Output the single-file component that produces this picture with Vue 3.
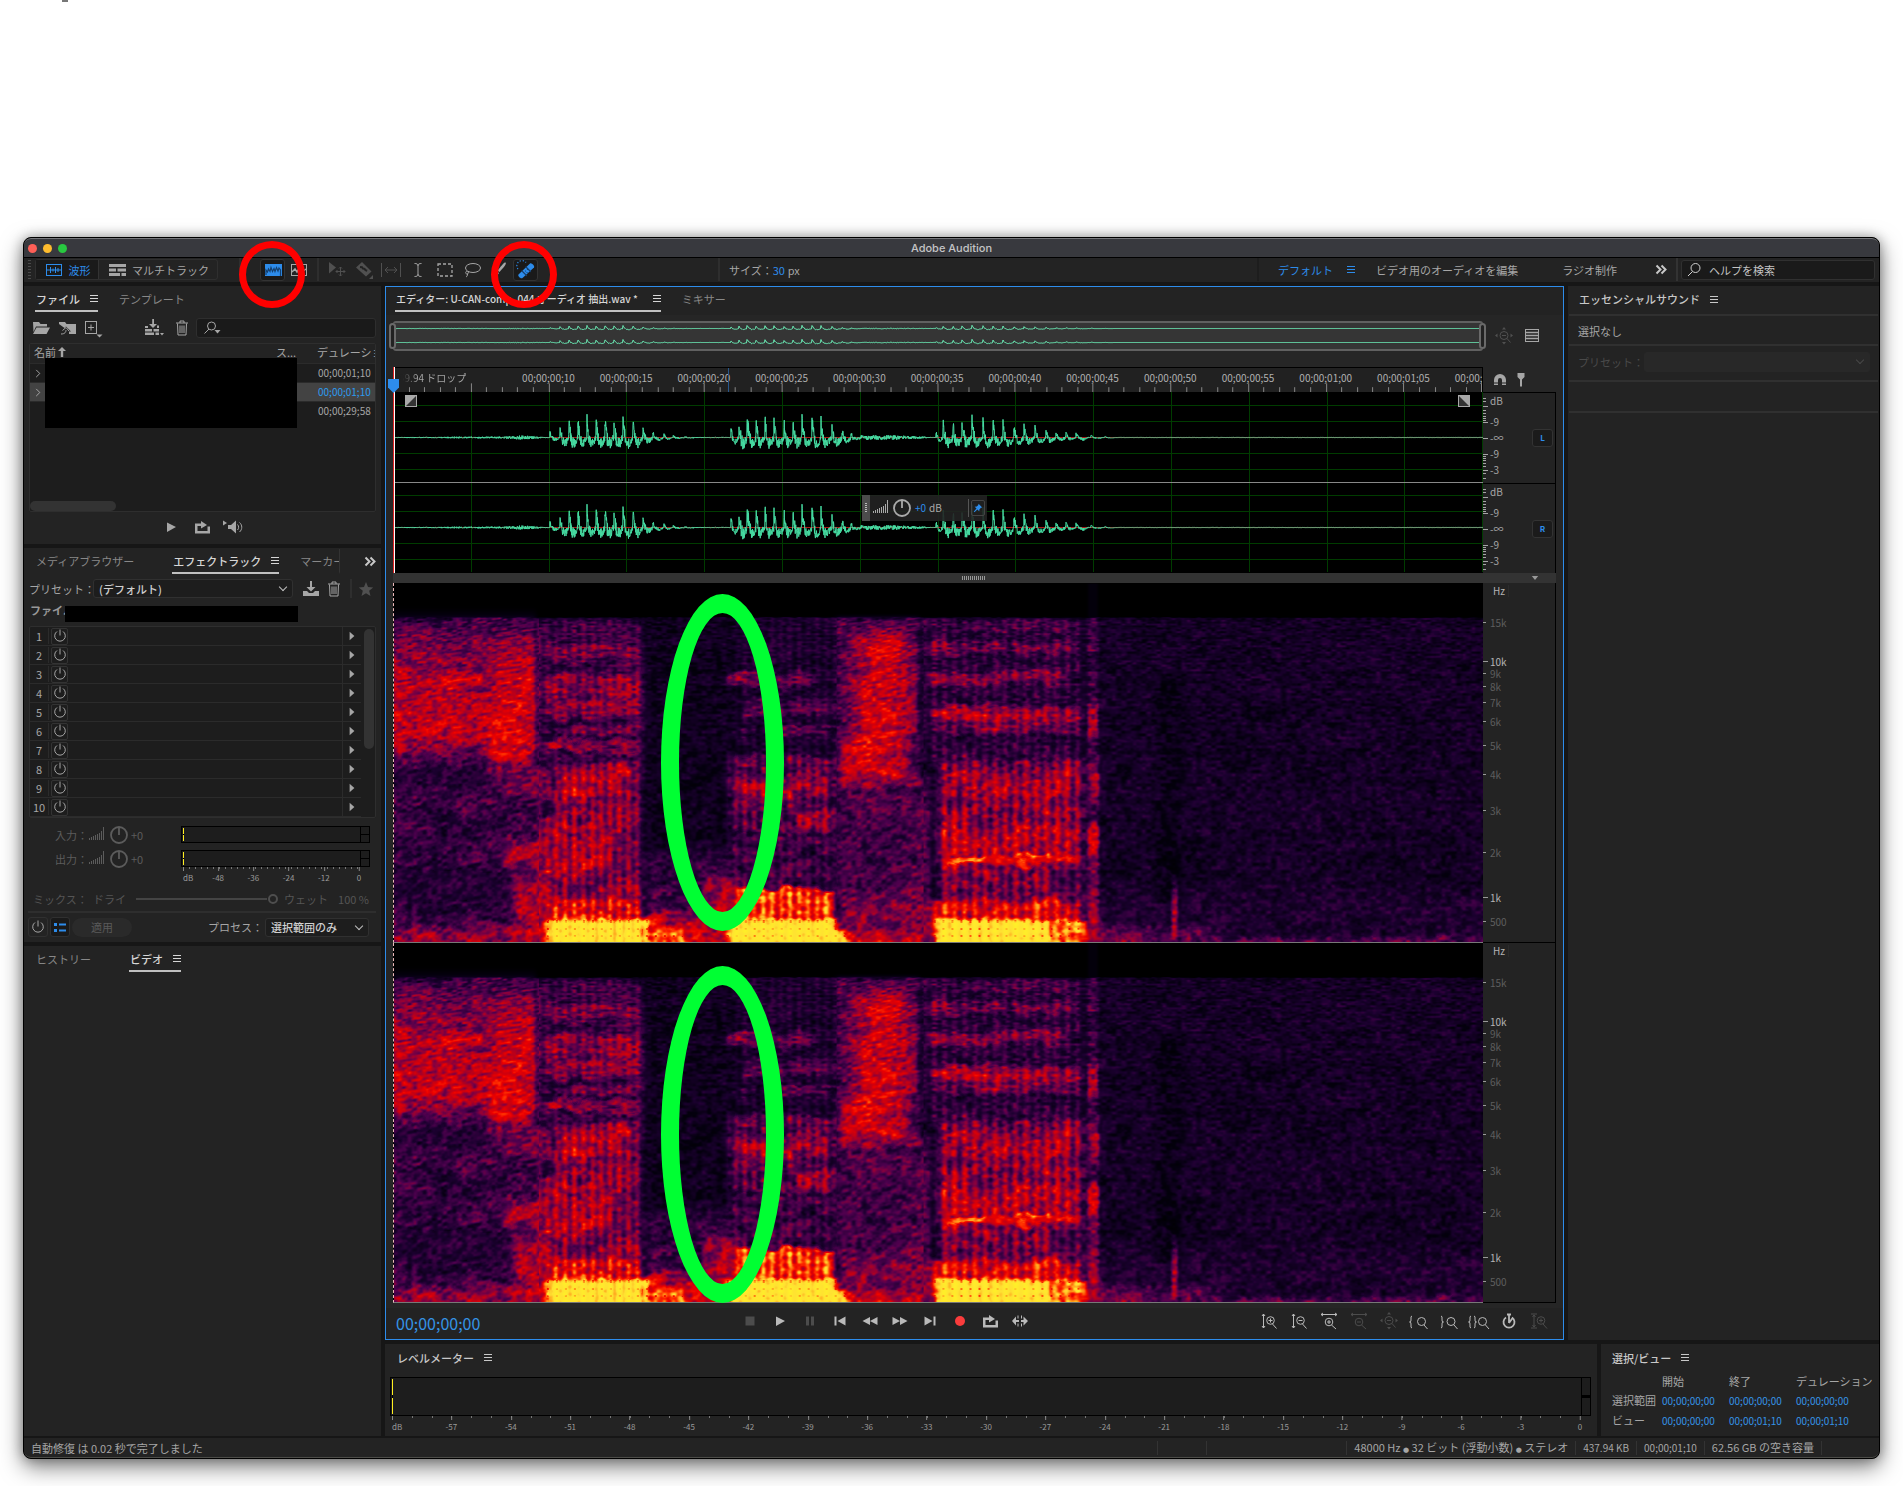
<script setup>
import { ref, computed, onMounted } from 'vue'

const icons = {
  menu: '<path d="M6 6.500h8M6 9.500h8M6 12.500h8" class="s"/>',
  chevrons: '<path d="M5.500 5.500l4 4-4 4M10.500 5.500l4 4-4 4" fill="none" stroke="currentColor" stroke-width="2"/>',
  search: '<circle cx="11.500" cy="8" r="4.500" class="s"/><path d="M8.500 11.500L4 16" class="s"/>',
  searchDrop: '<circle cx="9.500" cy="8" r="4" class="s"/><path d="M7 11L2.500 15.500" class="s"/><path d="M12.500 12h6l-3 3.500z"/>',
  wave: '<rect x="2.500" y="4.500" width="15" height="11" class="s"/><path d="M3 10h14M6.500 7v6M9 8.500v3M11.500 7v6M14 8v4" class="s"/>',
  multi: '<path d="M2 4h17v3H2zM2 8.500h7v3H2zM10.500 8.500H19v3h-8.500zM2 13h11v3H2zM14.500 13H19v3h-4.500z"/>',
  spectral: '<rect x="2" y="4" width="17" height="12"/><path d="M3 15v-5l1.500 2 1-3 1.500 2.500 1-4 1.500 4 1.500-3 1 3 1.500-4 1.500 3.500 1-3 1.500 2v6" fill="none" stroke="#14406f" stroke-width="1.200"/>',
  spectral2: '<rect x="2.500" y="4.500" width="15" height="11" class="s"/><path d="M3 12l3-3 2 3 3-5 2 5 4-3" fill="none" stroke="currentColor" stroke-width="1.500"/>',
  move: '<path d="M2 2v11.500l7-6z"/><path d="M13.500 7v9M9 11.500h9M12 8.500L13.500 7 15 8.500M12 14.500l1.500 1.500 1.500-1.500M10.500 10L9 11.500l1.500 1.500M16.500 10l1.500 1.500-1.500 1.500" class="s"/>',
  razor: '<path d="M2 7.500L8 2l9.500 9.500-5.500 5z"/><path d="M6 7l2 .2 1 1.300 1.500.3 1 1.400 1.700.5" fill="none" stroke="#232323" stroke-width="2"/><path d="M19 15v4h-4z"/>',
  slip: '<path d="M.5 3v14M19.500 3v14M4 10h12M7 7l-3 3 3 3M13 7l3 3-3 3" class="s"/>',
  ibeam: '<path d="M6.500 3.500c2 0 3.500.5 3.500 2 0-1.500 1.500-2 3.500-2M10 5v10M6.500 16.500c2 0 3.500-.5 3.500-2 0 1.500 1.500 2 3.500 2" class="s"/>',
  marquee: '<rect x="3" y="4" width="14" height="12" fill="none" stroke="currentColor" stroke-width="1.300" stroke-dasharray="3 2"/>',
  lasso: '<ellipse cx="11" cy="8" rx="7.500" ry="4.500" class="s"/><path d="M5 11c-2 1-1.500 3 0 3s2-2 .5-2.500M5.500 14c0 1.500-.5 2.500-1.500 3" class="s"/>',
  brush: '<path d="M16.500 2.500c1 .8.500 2.500-6 9.500l-2-1.500C14.500 3 15.800 2 16.500 2.500zM8 11.500l2 1.500c-1.500 3-4 4-6.500 4 1.700-1.500 2-4 4.500-5.500z"/>',
  heal: '<path d="M2 9a5 5 0 0 1 8-6.500" fill="none" stroke="currentColor" stroke-width="1.200" stroke-dasharray="1.200 1.800"/><path d="M2.500 14.500L14 3.500c1.500-1 5 2.500 4 4L6.500 18c-1.800 1.200-5.200-2-4-3.500z"/><path d="M6 11l4.500 4.500M10 7l4.500 4.500M9.500 11h.1M11 12.500h.1M11.500 9.500h.1" stroke="#14406f" stroke-width="1.200" fill="none" stroke-linecap="round"/>',
  folder: '<path d="M2 4h6l1.500 2H16v2.500H5L2.500 14zM5.500 9.500H19L15.500 16H2z"/>',
  importIc: '<path d="M2 4h6l1.500 2H19v10h-7v-2.500h2L9 8.500 7.500 10 2 6z"/><path d="M4 16c4 0 5-2 5-4M5.500 12.500L9 9.500l3 3.500" class="s"/>',
  add: '<rect x="2.500" y="3.500" width="11" height="12" class="s"/><path d="M8 6.500v6M5 9.500h6" class="s"/><path d="M13.500 16.500h6l-3 3z"/>',
  insert: '<path d="M9.200 1h1.800v5h3L10 10 6 6h3.200z"/><path d="M2 8h3v2H2zM2 11h7v2.500H2zM10.500 11H16v2.500h-5.500zM2 14.500h9V17H2zM12.500 14.500H16V17h-3.500zM14 7.500h2V10h-2zM17 15h4l-2 2.500z"/>',
  trash: '<path d="M4 5h12M8 5V3h4v2M5.500 5.500l.5 11.500h8l.5-11.500M8 7.500V15M10 7.500V15M12 7.500V15" class="s"/>',
  play: '<path d="M6 5.500l9 4.500-9 5z"/>',
  loop: '<path d="M3 6.500h6V4l6 4-6 3.500V9H5.500v5h10V9.500H18v7H3z"/>',
  speaker: '<path d="M0 3.500l4 2.500-4 2.500zM5 8h3l5-4.500v13L8 12H5z"/><path d="M14.500 7.500c1.500 1.500 1.500 4 0 5.500M16.500 5.500c3 2.500 3 7 0 9.500" class="s"/>',
  save: '<path d="M9 2h2v6h3.500L10 12.500 5.500 8H9zM2 12h4l2 2h4l2-2h4v5H2z"/>',
  star: '<path d="M10 3l2 5 5.200.4-4 3.400 1.300 5.200L10 14.200 5.500 17l1.300-5.200-4-3.400L8 8z"/>',
  power: '<path d="M7 5.500a5.300 5.300 0 1 0 6 0M10 3.500v6" class="s"/>',
  list: '<path d="M4 6h3v3H4zM4 12h3v3H4zM9 6.500h7v2H9zM9 12.500h7v2H9z"/>',
  arrow: '<path d="M6 3l8 7-8 7z"/>',
  bars: '<path d="M2.500 15v-2M4.500 15v-3M6.500 15v-4M8.500 15v-5M10.500 15V9M12.500 15V8M14.500 15V6M16.500 15V2" class="s"/>',
  knob: '<circle cx="10" cy="10" r="8" fill="none" stroke="currentColor" stroke-width="1.800"/><path d="M10 3v7" stroke="currentColor" stroke-width="1.800"/>',
  magnet: '<path d="M4 15v-5a6 6 0 0 1 12 0v5h-4v-5a2 2 0 0 0-4 0v5z"/><path d="M4 13h4M12 13h4" stroke="#232323"/>',
  marker: '<path d="M6.500 3h7v4l-2.500 2.500v7H9v-7L6.500 7z"/>',
  zoomAll: '<circle cx="10" cy="9.500" r="4" class="s"/><path d="M13 12.500l3.500 4M8 9.500h4" class="s"/><path d="M10 1l2 2.500H8zM10 18.500l2-2.500H8zM1 9.500L3.500 7.500v4zM19 9.500l-2.500-2v4z"/>',
  rows: '<rect x="3.500" y="3.500" width="13" height="12" class="s"/><path d="M4 6.500h12M4 9.500h12M4 12.500h12" fill="none" stroke="currentColor" stroke-width="1.500"/>',
  stop: '<path d="M5.500 5.500h9v9h-9z"/>',
  pause: '<path d="M6 5.500h3v9H6zM11 5.500h3v9h-3z"/>',
  prev: '<path d="M4.500 5.500h2v9h-2zM15.500 5.500v9L7.500 10z"/>',
  rew: '<path d="M10 6v8l-7.500-4zM17.500 6v8L10 10z"/>',
  ffw: '<path d="M2.500 6v8l7.500-4zM10 6v8l7.500-4z"/>',
  next: '<path d="M4.500 5.500v9l8-4.500zM13.500 5.500h2v9h-2z"/>',
  rec: '<circle cx="10" cy="10" r="5"/>',
  skip: '<path d="M6 5.500L2 10l4 4.500V11h3V9H6zM13.500 5.500l4.500 4.500-4.500 4.500V11H11V9h2.500zM7.500 4.500h1v3h-1zM7.500 12.500h1v3h-1zM11 4.500h1v3h-1zM11 12.500h1v3h-1z"/>',
  vIn: '<path d="M4.500 3v14M3 5l1.500-2L6 5M3 15l1.500 2L6 15M13.500 13l4 4.500M9.500 9.500h4M11.500 7.500v4" class="s"/><circle cx="11.500" cy="9.500" r="3.800" class="s"/>',
  vOut: '<path d="M4.500 3v14M3 5l1.500-2L6 5M3 15l1.500 2L6 15M13.500 13l4 4.500M9.500 9.500h4" class="s"/><circle cx="11.500" cy="9.500" r="3.800" class="s"/>',
  hIn: '<path d="M2 3.500h16M4 2L2 3.500 4 5M16 2l2 1.500L16 5M12.500 14l4.500 4M8 11h4M10 9v4" class="s"/><circle cx="10" cy="11" r="3.800" class="s"/>',
  hOut: '<path d="M2 3.500h16M4 2L2 3.500 4 5M16 2l2 1.500L16 5M12.500 14l4.500 4M8 11h4" class="s"/><circle cx="10" cy="11" r="3.800" class="s"/>',
  zL: '<path d="M3 5q-1.500 0-1 3t-1.500 3q2 0 1.500 3t1 3M15 14l3.500 4" class="s"/><circle cx="12.500" cy="10.500" r="4" class="s"/>',
  zR: '<path d="M2 5q1.500 0 1 3t1.500 3q-2 0-1.500 3t-1 3M15 14l3.500 4" class="s"/><circle cx="12" cy="10.500" r="4" class="s"/>',
  zLR: '<path d="M2 5q-1.500 0-1 3t-1.500 3q2 0 1.500 3t1 3M5 5q1.500 0 1 3t1.500 3q-2 0-1.500 3t-1 3M16.500 14l3.500 4" class="s"/><circle cx="13.500" cy="10.500" r="4" class="s"/>',
  timer: '<path d="M7 6.500a5.500 5.500 0 1 0 6 0M10 4v8M8 3.500h4M10 12l4-5.500" fill="none" stroke="currentColor" stroke-width="1.800"/>',
  vSel: '<path d="M2 3h6M2 17h6M5 4v12M3.500 6L5 4l1.500 2M3.500 14L5 16l1.500-2M14 13l4 4.500M10 9.500h4M12 7.500v4" class="s"/><circle cx="12" cy="9.500" r="3.800" class="s"/>',
  pin: '<path d="M11 3l6 6-2 .5-2.500 2.500-.5 3.500-3-3L4 17l-1-1 4.500-5-3-3 3.500-.5L10.500 5z"/>',
}

const tools = [
  { n: 'move', d: 1, l: '移動' }, { n: 'razor', d: 1, l: 'レーザー' }, { n: 'slip', d: 1, l: 'スリップ' },
  { n: 'ibeam', l: '時間選択' }, { n: 'marquee', l: '長方形選択' }, { n: 'lasso', l: 'なげなわ' },
  { n: 'brush', l: 'ブラシ' }, { n: 'heal', a: 1, l: 'スポット修復' },
]
const files = [
  { t: '00;00;01;10', c: 1 }, { t: '00;00;01;10', c: 1, sel: 1 }, { t: '00;00;29;58' },
]
const transport = [
  { n: 'stop', d: 1, l: '停止' }, { n: 'play', l: '再生' }, { n: 'pause', d: 1, l: '一時停止' }, { n: 'prev', l: '先頭' },
  { n: 'rew', l: '巻き戻し' }, { n: 'ffw', l: '早送り' }, { n: 'next', l: '末尾' }, { n: 'rec', r: 1, l: '録音' },
  { n: 'loop', l: 'ループ' }, { n: 'skip', l: 'スキップ' },
]
const zooms = [
  { n: 'vIn' }, { n: 'vOut' }, { n: 'hIn' }, { n: 'hOut', d: 1 }, { n: 'zoomAll', d: 1 },
  { n: 'zL' }, { n: 'zR' }, { n: 'zLR' }, { n: 'timer' }, { n: 'vSel', d: 1 },
]

const SPAN = 1090
const MAJOR = 77.8
const times = ['00;00;00;10', '00;00;00;15', '00;00;00;20', '00;00;00;25', '00;00;00;30', '00;00;00;35',
  '00;00;00;40', '00;00;00;45', '00;00;00;50', '00;00;00;55', '00;00;01;00', '00;00;01;05', '00;00;01;10']
  .map((t, i) => ({ t, x: ((i + 2) * MAJOR / SPAN) * 100 }))
const rulerTicks = computed(() => {
  let d = ''
  for (let i = 1; i <= 70; i++) {
    const x = Math.round(i * MAJOR / 5) + 0.5
    d += `M${x} 25v${i % 5 ? -5 : -9}`
  }
  return d
})
const vGrid = computed(() => {
  let d = ''
  for (let i = 1; i <= 14; i++) d += `M${Math.min(1089, Math.round(i * MAJOR)) + 0.5} 0V180`
  return d
})

const dbMarks = [{ t: 'dB', y: 8 }, { t: '-9', y: 29 }, { t: '-∞', y: 45 }, { t: '-9', y: 61 }, { t: '-3', y: 77 }]
const dbTicks = 'M0 5.500h3M0 8.500h3M0 13.500h5M0 17.500h3M0 20.500h3M0 23.500h3M0 25.500h3M0 27.500h3M0 29.500h5M0 45.500h5M0 61.500h5M0 63.500h3M0 65.500h3M0 67.500h3M0 70.500h3M0 73.500h3M0 77.500h5M0 80.500h3M0 85.500h3'
const hz = [
  { t: 'Hz', y: 8, k: 1, no: 1 }, { t: '15k', y: 40 }, { t: '10k', y: 79, k: 1 }, { t: '9k', y: 91 }, { t: '8k', y: 104 },
  { t: '7k', y: 120 }, { t: '6k', y: 139 }, { t: '5k', y: 163 }, { t: '4k', y: 192 }, { t: '3k', y: 228 },
  { t: '2k', y: 270 }, { t: '1k', y: 315, k: 1 }, { t: '500', y: 339 },
]
const rackScale = ['dB', '-48', '-36', '-24', '-12', '0'].map((t, i) => ({ t, x: i * 20 }))
const levelScale = Array.from({ length: 21 }, (_, i) => ({ t: i ? String(i * 3 - 60) : 'dB', x: i * 5 }))

/* deterministic noise shared by the waveform and the spectrogram */
function hash(x, y) {
  let n = (Math.imul(x, 374761393) + Math.imul(y, 668265263)) | 0
  n = Math.imul(n ^ (n >>> 13), 1274126177)
  n = Math.imul(n ^ (n >>> 15), 2246822519)
  return ((n ^ (n >>> 16)) >>> 0) / 4294967295
}
function noise(x, y) {
  const xi = Math.floor(x), yi = Math.floor(y)
  let fx = x - xi, fy = y - yi
  fx = fx * fx * (3 - 2 * fx)
  fy = fy * fy * (3 - 2 * fy)
  const a = hash(xi, yi), b = hash(xi + 1, yi), c = hash(xi, yi + 1), d = hash(xi + 1, yi + 1)
  return a + (b - a) * fx + (c - a) * fy + (a - b - c + d) * fx * fy
}

/* voiced pulses: [x, height] */
const pulses = [
  [157, 5], [167, 14], [176, 16], [185, 16], [194, 16], [203, 17], [212, 19], [221, 18], [230, 17], [240, 16], [250, 9], [260, 5], [271, 3], [280, 2], [292, 1],
  [338, 10], [346, 19], [354, 23], [363, 18], [372, 18], [381, 15], [391, 15], [400, 17], [409, 17], [419, 18], [428, 16], [439, 13], [449, 8], [458, 4], [468, 1],
  [543, 7], [550, 17], [560, 15], [569, 17], [579, 17], [590, 15], [600, 14], [610, 13], [621, 11], [631, 10], [642, 9], [653, 8], [663, 5], [673, 4], [683, 4], [698, 2], [712, 1],
]
function signal(x, rough) {
  let k = -1
  for (let i = 0; i < pulses.length; i++) if (pulses[i][0] <= x) k = i
  let v = 0
  if (k >= 0) {
    const [px, h] = pulses[k]
    const nx = pulses[k + 1] ? pulses[k + 1][0] : px + 12
    const p = (x - px) / Math.min(nx - px, 13)
    if (p < 1) {
      v = h * Math.exp(-p * 4.5) - Math.min(h, 15) * 0.5 * Math.sin(Math.PI * Math.pow(p, 0.8))
      v += (hash(Math.round(x * 4), 3) - 0.5) * h * 0.95 * (1 - p * 0.6) * rough
    }
  }
  let f = 0.4
  if (x < 150) f = x > 110 ? 2.2 - Math.abs(x - 128) / 14 : 0.4 + x / 160
  if (x > 455 && x < 535) f = 2.6 - Math.abs(x - 490) / 25
  if (x > 700) f = 0.15
  return v + (hash(Math.round(x * 4), 9) - 0.5) * 2 * f
}
function wavePath(mid, scale, step, rough) {
  let d = `M0 ${mid}`
  for (let x = 0; x <= SPAN; x += step) d += `L${x} ${(mid - signal(x, rough) * scale).toFixed(1)}`
  return d
}
const waves = [wavePath(45.5, 1, 0.25, 1), wavePath(135.5, 1, 0.25, 1)]
const overview = [wavePath(5.5, 0.16, 0.5, 0.5), wavePath(19.5, 0.16, 0.5, 0.5)]

/* painted regions: x0, x1, y0, y1, level, soft x, soft y, stripe period, stripe depth */
const regions = [
  [-20, 1110, 34, 380, 0.22, 1, 1, 0, 0],
  [-20, 142, 36, 110, 0.43, 8, 30, 0, 0], [-20, 142, 80, 176, 0.57, 8, 46, 0, 0], [95, 140, 66, 195, 0.62, 20, 40, 0, 0],
  [-20, 150, 192, 380, 0.33, 8, 34, 0, 0], [-20, 110, 285, 320, 0.29, 20, 10, 0, 0], [110, 160, 185, 210, 0.48, 18, 14, 0, 0],
  [110, 165, 258, 284, 0.56, 22, 14, 0, 0], [-20, 150, 344, 390, 0.52, 8, 18, 0, 0], [120, 160, 290, 390, 0.55, 16, 24, 0, 0],
  [142, 250, 36, 180, 0.34, 8, 5, 9, 0.03], [150, 248, 62, 76, 0.49, 16, 9, 9, 0.03], [150, 248, 90, 115, 0.53, 16, 12, 9, 0.05],
  [150, 248, 116, 134, 0.52, 16, 10, 9, 0.03], [165, 250, 142, 153, 0.45, 16, 7, 9, 0.03], [150, 248, 157, 167, 0.52, 16, 5, 0, 0],
  [158, 248, 178, 345, 0.49, 16, 14, 9, 0.06], [165, 235, 184, 214, 0.57, 16, 14, 9, 0.06], [145, 215, 238, 292, 0.58, 18, 18, 9, 0.06],
  [152, 252, 315, 345, 0.68, 16, 14, 9, 0.08], [250, 345, 34, 345, 0.19, 14, 2, 0, 0], [250, 345, 270, 380, 0.32, 16, 30, 0, 0],
  [255, 310, 328, 380, 0.58, 16, 14, 0, 0], [152, 258, 336, 390, 1, 14, 8, 9, 0.05], [250, 298, 344, 390, 0.84, 24, 12, 9, 0.06],
  [290, 330, 340, 390, 0.62, 14, 10, 0, 0],
  [343, 442, 34, 180, 0.26, 12, 3, 9, 0.03], [333, 420, 91, 102, 0.47, 12, 9, 9, 0.03], [350, 440, 116, 132, 0.39, 12, 9, 9, 0.03],
  [345, 440, 145, 153, 0.38, 12, 6, 0, 0], [335, 440, 174, 250, 0.42, 16, 6, 9, 0.06], [345, 435, 194, 214, 0.57, 16, 14, 9, 0.05],
  [405, 442, 226, 242, 0.52, 14, 10, 9, 0.05], [335, 442, 252, 305, 0.36, 14, 12, 9, 0.05], [310, 345, 295, 360, 0.54, 14, 16, 0, 0],
  [342, 440, 305, 345, 0.78, 8, 7, 9, 0.09], [333, 462, 336, 390, 1, 14, 7, 9, 0.04], [455, 530, 342, 390, 0.68, 18, 12, 0, 0],
  [442, 525, 34, 205, 0.4, 10, 10, 0, 0], [462, 514, 50, 200, 0.61, 34, 36, 0, 0], [448, 508, 155, 200, 0.62, 20, 20, 0, 0],
  [445, 532, 192, 204, 0.53, 14, 8, 0, 0], [442, 535, 206, 345, 0.38, 12, 10, 0, 0], [450, 540, 315, 350, 0.5, 20, 22, 0, 0],
  [530, 688, 36, 180, 0.3, 14, 3, 10.200, 0.04], [530, 680, 36, 48, 0.37, 14, 8, 10.200, 0.05], [534, 682, 58, 70, 0.47, 14, 9, 10.200, 0.05],
  [534, 670, 88, 101, 0.51, 14, 9, 10.200, 0.05], [540, 686, 122, 150, 0.47, 14, 9, 10.200, 0.06], [540, 686, 125, 135, 0.57, 14, 6, 10.200, 0.05],
  [545, 690, 176, 345, 0.49, 16, 14, 10.200, 0.08], [550, 672, 188, 212, 0.56, 14, 12, 10.200, 0.06], [545, 682, 242, 282, 0.59, 14, 14, 10.200, 0.07],
  [552, 592, 274, 281, 0.82, 6, 4, 0, 0], [620, 655, 272, 279, 0.82, 6, 4, 0, 0], [592, 682, 274, 282, 0.68, 6, 4, 0, 0], [655, 686, 285, 330, 0.4, 14, 14, 10.200, 0.05],
  [538, 686, 318, 345, 0.68, 14, 14, 10.200, 0.08],
  [540, 668, 336, 390, 1, 14, 7, 10.200, 0.05], [655, 694, 337, 390, 0.84, 14, 7, 10.200, 0.06],
  [694, 704, 0, 34, 0.09, 4, 2, 0, 0], [694, 704, 34, 345, 0.34, 6, 2, 0, 0], [694, 704, 58, 68, 0.45, 5, 14, 0, 0], [694, 704, 122, 150, 0.59, 5, 12, 0, 0],
  [694, 705, 175, 222, 0.5, 6, 18, 0, 0], [694, 705, 240, 280, 0.58, 5, 18, 0, 0], [694, 705, 280, 345, 0.48, 6, 14, 0, 0],
  [696, 755, 335, 390, 0.62, 16, 9, 0, 0], [745, 825, 338, 390, 0.51, 36, 14, 0, 0], [790, 1130, 352, 390, 0.41, 40, 10, 0, 0],
  [705, 1130, 305, 350, 0.26, 12, 30, 0, 0], [764, 790, 90, 320, 0.15, 22, 30, 0, 0], [778, 784, 308, 365, 0.55, 5, 26, 0, 0],
]
const stops = [[0, 0, 0, 0], [0.12, 4, 0, 14], [0.26, 28, 0, 48], [0.4, 78, 0, 78], [0.5, 135, 0, 62], [0.6, 195, 0, 20], [0.68, 235, 0, 0], [0.77, 255, 48, 0], [0.87, 255, 150, 25], [0.96, 255, 225, 50], [1.1, 255, 240, 40]]
function colour(v) {
  for (let i = 1; i < stops.length; i++) {
    if (v <= stops[i][0]) {
      const a = stops[i - 1], b = stops[i], t = Math.max(0, (v - a[0]) / (b[0] - a[0]))
      return [a[1] + (b[1] - a[1]) * t, a[2] + (b[2] - a[2]) * t, a[3] + (b[3] - a[3]) * t]
    }
  }
  return [255, 240, 40]
}
function edge(d, s) {
  const t = Math.min(1, Math.max(0, d / s + 0.5))
  return t * t * (3 - 2 * t)
}
function paint(canvas) {
  const W = SPAN, H = 359
  const field = new Float32Array(W * H)
  for (const [x0, x1, y0, y1, lv, sx, sy, per, dep] of regions) {
    const xa = Math.max(0, Math.floor(x0 - sx)), xb = Math.min(W, Math.ceil(x1 + sx))
    const ya = Math.max(0, Math.floor(y0 - sy)), yb = Math.min(H, Math.ceil(y1 + sy))
    for (let y = ya; y < yb; y++) {
      const wy = edge(y - y0, sy) * edge(y1 - y, sy)
      for (let x = xa; x < xb; x++) {
        const w = wy * edge(x - x0, sx) * edge(x1 - x, sx)
        const target = lv + (per ? Math.cos((x * 2 * Math.PI) / per) * dep : 0)
        field[y * W + x] += (target - field[y * W + x]) * w
      }
    }
  }
  const ctx = canvas.getContext('2d')
  const img = ctx.createImageData(W, H)
  let row = 50
  for (let y = 0; y < H; y++) {
    row += 1 / (1.5 + Math.min(1, y / 240) * 2.2)
    for (let x = 0; x < W; x++) {
      let wy = y
      if (y > 45) wy = Math.min(H - 1, Math.max(40, Math.round(y + (noise(x / 14, y / 9 + 900) - 0.5) * (y > 325 ? 3 : 9))))
      let v = field[wy * W + x]
      if (y > 33) {
        const tilt = x < 145 || (x > 442 && x < 530) ? x * 0.06 : 0
        const n = noise(x / 5, row + tilt) * 0.72 + noise(x / 3 + 400, y / 2.4) * 0.28
        const slow = noise(x / 26 + 70, y / 12 + 30) - 0.5
        const amp = v > 0.9 ? 0.14 : v < 0.3 ? 0.26 : 0.36
        v += (n - 0.53) * amp + slow * (v < 0.3 ? 0.05 : v > 0.9 ? 0.02 : 0.11)
        if (y > 336 && v > 0.8 && (y - 338) % 7 < 2 && x % 9 < 2) v -= 0.14
      }
      const c = colour(v)
      const o = (y * W + x) * 4
      img.data[o] = c[0]
      img.data[o + 1] = c[1]
      img.data[o + 2] = c[2]
      img.data[o + 3] = 255
    }
  }
  ctx.putImageData(img, 0, 0)
}
const specL = ref(null)
const specR = ref(null)
onMounted(() => {
  paint(specL.value)
  paint(specR.value)
})
</script>

<template>
  <div class="page">
    <i class="mark"></i>
    <main class="window">
      <header class="title">
        <span class="lights"><i class="r"></i><i class="y"></i><i class="g"></i></span>
        <h1>Adobe Audition</h1>
      </header>

      <div class="toolbar">
        <i class="grip"></i>
        <div class="modes">
          <button class="on"><svg class="ic" viewBox="0 0 20 20" v-html="icons.wave"></svg>波形</button>
          <button><svg class="ic" viewBox="0 0 20 20" v-html="icons.multi"></svg>マルチトラック</button>
        </div>
        <i class="vr"></i>
        <div class="views">
          <button class="sq on" aria-label="スペクトル"><svg class="ic" viewBox="0 0 20 20" v-html="icons.spectral"></svg></button>
          <button class="sq" aria-label="ピッチ"><svg class="ic" viewBox="0 0 20 20" v-html="icons.spectral2"></svg></button>
          <i class="ring first"></i>
        </div>
        <i class="vr"></i>
        <div class="tools">
          <button v-for="t in tools" :key="t.n" class="sq" :class="{ on: t.a, off: t.d }" :aria-label="t.l"><svg class="ic" viewBox="0 0 20 20" v-html="icons[t.n]"></svg></button>
          <i class="ring second"></i>
        </div>
        <div class="size"><label for="sz">サイズ：</label><input id="sz" value="30" /><span>px</span></div>
        <nav class="spaces">
          <a href="#" class="blue">デフォルト</a>
          <svg class="ic blue" viewBox="0 0 20 20" v-html="icons.menu"></svg>
          <a href="#" class="wide">ビデオ用のオーディオを編集</a>
          <a href="#" class="radio">ラジオ制作</a>
          <button aria-label="その他"><svg class="ic" viewBox="0 0 20 20" v-html="icons.chevrons"></svg></button>
        </nav>
        <label class="help"><svg class="ic" viewBox="0 0 20 20" v-html="icons.search"></svg><input type="search" aria-label="ヘルプ" placeholder="ヘルプを検索" /></label>
      </div>

      <div class="work">
        <div class="left">
          <section class="panel files">
            <div class="tabs">
              <button class="tab on">ファイル<svg class="ic" viewBox="0 0 20 20" v-html="icons.menu"></svg></button>
              <button class="tab">テンプレート</button>
            </div>
            <div class="fbar">
              <button aria-label="開く"><svg class="ic" viewBox="0 0 20 20" v-html="icons.folder"></svg></button>
              <button aria-label="読み込み"><svg class="ic" viewBox="0 0 20 20" v-html="icons.importIc"></svg></button>
              <button aria-label="新規"><svg class="ic" viewBox="0 0 20 20" v-html="icons.add"></svg></button>
              <button class="push" aria-label="挿入"><svg class="ic" viewBox="0 0 20 20" v-html="icons.insert"></svg></button>
              <button class="del" aria-label="削除"><svg class="ic" viewBox="0 0 20 20" v-html="icons.trash"></svg></button>
              <label class="find"><svg class="ic" viewBox="0 0 20 20" v-html="icons.searchDrop"></svg><input type="search" aria-label="ファイルを検索" /></label>
            </div>
            <div class="flist">
              <table>
                <thead><tr><th>名前<svg class="up" viewBox="0 0 8 10"><path d="M4 0l4 4H5.200v6H2.800V4H0z" /></svg></th><th class="st">ス...</th><th class="du">デュレーション</th></tr></thead>
                <tbody>
                  <tr v-for="(f, i) in files" :key="i" :class="{ sel: f.sel }"><td><svg v-if="f.c" class="chev" viewBox="0 0 6 10"><path d="M1 1l4 4-4 4" /></svg></td><td></td><td class="time">{{ f.t }}</td></tr>
                </tbody>
              </table>
              <div class="cover big"></div>
              <i class="hscroll"></i>
            </div>
            <div class="preview">
              <button aria-label="再生"><svg class="ic" viewBox="0 0 20 20" v-html="icons.play"></svg></button>
              <button aria-label="ループ"><svg class="ic" viewBox="0 0 20 20" v-html="icons.loop"></svg></button>
              <button aria-label="自動再生"><svg class="ic" viewBox="0 0 20 20" v-html="icons.speaker"></svg></button>
            </div>
          </section>

          <section class="panel rack">
            <div class="tabs">
              <button class="tab">メディアブラウザー</button>
              <button class="tab on mid">エフェクトラック<svg class="ic" viewBox="0 0 20 20" v-html="icons.menu"></svg></button>
              <button class="tab cut">マーカー</button>
              <button class="more" aria-label="その他のタブ"><svg class="ic" viewBox="0 0 20 20" v-html="icons.chevrons"></svg></button>
            </div>
            <div class="preset">
              <label for="pre">プリセット：</label>
              <span class="pick"><select id="pre"><option>(デフォルト)</option></select></span>
              <button aria-label="保存"><svg class="ic" viewBox="0 0 20 20" v-html="icons.save"></svg></button>
              <button aria-label="削除"><svg class="ic" viewBox="0 0 20 20" v-html="icons.trash"></svg></button>
              <i class="vr"></i>
              <button class="off" aria-label="お気に入り"><svg class="ic" viewBox="0 0 20 20" v-html="icons.star"></svg></button>
            </div>
            <div class="rfile">ファイル<div class="cover small"></div></div>
            <div class="slots">
              <ol>
                <li v-for="n in 10" :key="n"><span class="no">{{ n }}</span><button class="pw" :aria-label="'スロット ' + n"><svg class="ic" viewBox="0 0 20 20" v-html="icons.power"></svg></button><span class="slot"></span><button class="ar" aria-label="選択"><svg class="ic" viewBox="0 0 20 20" v-html="icons.arrow"></svg></button></li>
              </ol>
              <i class="vscroll"></i>
            </div>
            <div class="io">
              <div v-for="l in ['入力：', '出力：']" :key="l" class="iorow">
                <span class="iol">{{ l }}</span><svg class="ic" viewBox="0 0 20 20" v-html="icons.bars"></svg><svg class="ic" viewBox="0 0 20 20" v-html="icons.knob"></svg><span class="val">+0</span>
                <div class="meter"><i></i></div>
              </div>
              <div class="scale rscale"><span v-for="s in rackScale" :key="s.t" :style="{ left: s.x + '%' }">{{ s.t }}</span></div>
            </div>
            <div class="mix"><label for="mix">ミックス：</label><span class="dry">ドライ</span><input id="mix" type="range" value="100" /><span>ウェット</span><span class="pct">100 %</span></div>
            <div class="proc">
              <button class="box" aria-label="電源"><svg class="ic" viewBox="0 0 20 20" v-html="icons.power"></svg></button>
              <button class="box on" aria-label="リスト"><svg class="ic" viewBox="0 0 20 20" v-html="icons.list"></svg></button>
              <button class="apply" disabled>適用</button>
              <label for="prc">プロセス：</label>
              <span class="pick"><select id="prc"><option>選択範囲のみ</option></select></span>
            </div>
          </section>

          <section class="panel video">
            <div class="tabs">
              <button class="tab">ヒストリー</button>
              <button class="tab on mid">ビデオ<svg class="ic" viewBox="0 0 20 20" v-html="icons.menu"></svg></button>
            </div>
          </section>
        </div>

        <div class="right">
          <div class="upper">
            <section class="panel editor">
              <div class="tabs">
                <button class="tab on doc">エディター: U-CAN-comp_044 オーディオ 抽出.wav *<svg class="ic" viewBox="0 0 20 20" v-html="icons.menu"></svg></button>
                <button class="tab">ミキサー</button>
              </div>
              <div class="pair ovrow">
                <div class="over"><svg viewBox="0 0 1090 26" preserveAspectRatio="none"><path v-for="(p, i) in overview" :key="i" :d="p" /></svg><i class="hd l"></i><i class="hd r"></i></div>
                <div class="side icons"><button class="off" aria-label="全体表示"><svg class="ic" viewBox="0 0 20 20" v-html="icons.zoomAll"></svg></button><button aria-label="レイヤー"><svg class="ic" viewBox="0 0 20 20" v-html="icons.rows"></svg></button></div>
              </div>
              <div class="pair rurow">
                <div class="ruler">
                  <svg viewBox="0 0 1090 25" preserveAspectRatio="none"><path :d="rulerTicks" /></svg>
                  <span class="drop">59.94 ドロップ</span>
                  <span v-for="t in times" :key="t.t" class="tm" :style="{ left: t.x + '%' }">{{ t.t }}</span>
                  <i class="cur"></i>
                </div>
                <div class="side icons tight"><button aria-label="スナップ"><svg class="ic" viewBox="0 0 20 20" v-html="icons.magnet"></svg></button><button aria-label="マーカー"><svg class="ic" viewBox="0 0 20 20" v-html="icons.marker"></svg></button></div>
              </div>
              <div class="pair">
                <div class="waves">
                  <svg viewBox="0 0 1090 181" preserveAspectRatio="none">
                    <path :d="vGrid" class="grid" />
                    <path d="M0 13.500H1090M0 29.500H1090M0 61.500H1090M0 77.500H1090M0 103.500H1090M0 119.500H1090M0 151.500H1090M0 167.500H1090" class="grid" />
                    <path d="M0 45.500H1090M0 135.500H1090" class="zero" />
                    <path v-for="(p, i) in waves" :key="i" :d="p" class="wv" />
                    <path d="M0 90.500H1090" class="div" />
                  </svg>
                  <svg class="fade fi" viewBox="0 0 12 12"><path d="M0 0h12v12H0z" fill="#a8a8a8" /><path d="M1 11L11 1v10z" fill="#333" /></svg>
                  <svg class="fade fo" viewBox="0 0 12 12"><path d="M0 0h12v12H0z" fill="#a8a8a8" /><path d="M1 1l10 10H1z" fill="#333" /></svg>
                  <i class="head"></i>
                  <div class="hud">
                    <i class="hgrip"></i><svg class="ic" viewBox="0 0 20 20" v-html="icons.bars"></svg><svg class="ic" viewBox="0 0 20 20" v-html="icons.knob"></svg><b>+0</b><span>dB</span><i class="vr"></i><button aria-label="固定"><svg class="ic" viewBox="0 0 20 20" v-html="icons.pin"></svg></button>
                  </div>
                </div>
                <div class="side scalebox">
                  <div v-for="c in ['L', 'R']" :key="c" class="dbs">
                    <svg viewBox="0 0 6 90"><path :d="dbTicks" class="s" /></svg>
                    <span v-for="(m, i) in dbMarks" :key="i" :style="{ top: m.y + 'px' }">{{ m.t }}</span>
                    <button>{{ c }}</button>
                  </div>
                </div>
              </div>
              <div class="split"><i></i><svg viewBox="0 0 8 5"><path d="M0 0h8L4 5z" /></svg></div>
              <div class="pair">
                <div class="spec"><canvas ref="specL" width="1090" height="359"></canvas><i class="oval a"></i></div>
                <div class="side hzs"><span v-for="m in hz" :key="m.t" :class="{ k: m.k, no: m.no }" :style="{ top: m.y + 'px' }">{{ m.t }}</span></div>
              </div>
              <div class="pair">
                <div class="spec"><canvas ref="specR" width="1090" height="359"></canvas><i class="oval b"></i></div>
                <div class="side hzs"><span v-for="m in hz" :key="m.t" :class="{ k: m.k, no: m.no }" :style="{ top: m.y + 'px' }">{{ m.t }}</span></div>
              </div>
              <div class="transport">
                <output>00;00;00;00</output>
                <div class="btns"><button v-for="t in transport" :key="t.n" :class="{ off: t.d, rec: t.r }" :aria-label="t.l"><svg class="ic" viewBox="0 0 20 20" v-html="icons[t.n]"></svg></button></div>
                <div class="btns"><button v-for="t in zooms" :key="t.n" :class="{ off: t.d }" aria-label="ズーム"><svg class="ic" viewBox="0 0 20 20" v-html="icons[t.n]"></svg></button></div>
              </div>
            </section>

            <section class="panel sound">
              <div class="tabs"><h2>エッセンシャルサウンド<svg class="ic" viewBox="0 0 20 20" v-html="icons.menu"></svg></h2></div>
              <p class="none">選択なし</p>
              <div class="spre"><label for="sp">プリセット：</label><span class="pick"><select id="sp" disabled><option></option></select></span></div>
              <div class="empty"></div>
            </section>
          </div>

          <div class="lower">
            <section class="panel levels">
              <div class="tabs"><h2>レベルメーター<svg class="ic" viewBox="0 0 20 20" v-html="icons.menu"></svg></h2></div>
              <div class="meter large"><i></i></div>
              <div class="scale lscale"><span v-for="s in levelScale" :key="s.t" :style="{ left: s.x + '%' }">{{ s.t }}</span></div>
            </section>
            <section class="panel selview">
              <div class="tabs"><h2>選択/ビュー<svg class="ic" viewBox="0 0 20 20" v-html="icons.menu"></svg></h2></div>
              <table>
                <thead><tr><th></th><th>開始</th><th>終了</th><th>デュレーション</th></tr></thead>
                <tbody>
                  <tr><th>選択範囲</th><td>00;00;00;00</td><td>00;00;00;00</td><td>00;00;00;00</td></tr>
                  <tr><th>ビュー</th><td>00;00;00;00</td><td>00;00;01;10</td><td>00;00;01;10</td></tr>
                </tbody>
              </table>
            </section>
          </div>
        </div>
      </div>

      <footer class="status">
        <span class="msg">自動修復 は 0.02 秒で完了しました</span>
        <span class="gapA"></span><span class="gapB"></span>
        <span>48000 Hz <b>●</b> 32 ビット (浮動小数) <b>●</b> ステレオ</span><span class="num">437.94 KB</span><span class="num">00;00;01;10</span><span class="last">62.56 GB の空き容量</span>
      </footer>
    </main>
  </div>
</template>

<style>
body { margin: 0; background: #fff; }
.s { fill: none; stroke: currentColor; stroke-width: 1; }
</style>

<style scoped>
* { box-sizing: border-box; }
.page { position: relative; padding: 237px 23px 27px 23px; font: 11px/16px "Noto Sans CJK JP", sans-serif; color: #a6a6a6; }
.mark { position: absolute; left: 62px; top: 0; width: 6px; height: 2px; background: #777; }
button, input, select, h1, h2, p, ol { font: inherit; color: inherit; margin: 0; padding: 0; border: 0; background: none; }
button { display: flex; align-items: center; justify-content: center; white-space: nowrap; flex: none; }
input { min-width: 0; outline: 0; }
a { color: inherit; text-decoration: none; }
.ic { width: 20px; height: 20px; flex: none; fill: currentColor; display: block; overflow: visible; }
.off { color: #505050; }
.blue { color: #2d8ceb; }
.vr { width: 1px; align-self: stretch; background: #3a3a3a; flex: none; }

.window { border: 1px solid #000; border-radius: 8px; background: #161616; box-shadow: 0 8px 22px rgba(0, 0, 0, .5), 0 0 12px rgba(0, 0, 0, .3); overflow: clip; }
.title { height: 20px; display: grid; grid-template-columns: 1fr auto 1fr; align-items: center; background: #38393e; border-top: 1px solid #77787c; border-bottom: 1px solid #000; border-radius: 7px 7px 0 0; padding: 0 4px; }
.title h1 { font: 500 11px/16px Inter, sans-serif; color: #c4c4c6; }
.lights { display: flex; gap: 6px; }
.lights i { width: 9px; height: 9px; border-radius: 50%; }
.r { background: #ff5f57; } .y { background: #febc2e; } .g { background: #28c840; }

.toolbar { display: flex; align-items: center; height: 24px; background: #232323; padding-bottom: 1px; }
.grip { width: 3px; height: 20px; margin: 0 4px; background: repeating-linear-gradient(#4a4a4a 0 1px, transparent 1px 3px); }
.modes { display: flex; height: 21px; border: 1px solid #2f2f2f; border-radius: 3px; }
.modes button { gap: 5px; padding: 0 8px; }
.modes .on { background: #1a1a1a; color: #2d8ceb; width: 62px; }
.modes button + button { width: 119px; border-left: 1px solid #333; }
.toolbar > .vr { margin: 0 19px 0 21px; width: 2px; background: #2e2e2e; }
.views { display: flex; position: relative; gap: 1px; }
.toolbar > .views + .vr { margin: 0 5px 0 6px; }
.sq { width: 25px; height: 22px; border-radius: 3px; }
.sq.on { background: #1a1a1a; border: 1px solid #333; color: #2d8ceb; }
.tools { display: flex; position: relative; gap: 2px; }
.ring { position: absolute; width: 66px; height: 67px; border: 7px solid #f00; border-radius: 50%; z-index: 5; pointer-events: none; }
.first { left: -21px; top: -18px; }
.second { right: -19px; top: -18px; }
.size { margin-left: 180px; height: 100%; border-left: 2px solid #2e2e2e; display: flex; align-items: center; padding: 1px 0 0 9px; }
.size input { width: 15px; color: #2d8ceb; }
.spaces { margin-left: auto; height: 100%; display: flex; align-items: center; border-left: 2px solid #1d1d1d; padding-left: 19px; width: 421px; border-right: 2px solid #333; margin-right: 3px; white-space: nowrap; }
.spaces .ic.blue { margin-left: 8px; }
.wide { margin-left: 15px; }
.radio { margin-left: 44px; }
.spaces button { margin-left: auto; color: #c8c8c8; margin-right: 5px; }
.help { display: flex; align-items: center; width: 194px; height: 20px; background: #1a1a1a; border: 1px solid #303030; border-radius: 3px; margin-right: 4px; color: #d0d0d0; padding-left: 2px; gap: 5px; }
.help input { width: 140px; }
.help input::placeholder { color: #c4c4c4; opacity: 1; }

.work { display: flex; gap: 4px; padding: 4px 0 2px; }
.left { width: 357px; flex: none; display: flex; flex-direction: column; gap: 4px; }
.right { flex: 1; min-width: 0; display: flex; flex-direction: column; gap: 4px; }
.upper, .lower { display: flex; gap: 4px; }
.panel { background: #232323; border: 1px solid #232323; min-width: 0; }
.tabs { display: flex; padding: 0 10px; height: 25px; gap: 20px; }
.tab { height: 25px; border-bottom: 2px solid transparent; padding: 0 1px 0 1px; color: #888; }
.tab.on { border-color: #c0c0c0; color: #d6d6d6; padding-right: 0; font-weight: 500; }
.tab .ic, h2 .ic { margin: 1px -6px 0 4px; }
.tab.doc { font-size: 10px; }
.tab.doc .ic { margin-left: 9px; }
h2 { display: flex; align-items: center; font-weight: 500; color: #c8c8c8; }

.files { height: 258px; }
.fbar { display: flex; align-items: center; height: 20px; margin-top: 6px; padding: 0 4px 0 6px; gap: 6px; }
.fbar .push { margin-left: 34px; } .fbar .del { margin-left: 3px; }
.find { display: flex; flex: 1; min-width: 0; height: 20px; align-items: center; background: #1a1a1a; border: 1px solid #2e2e2e; border-radius: 3px; padding-left: 5px; margin-left: -2px; }
.flist { position: relative; height: 169px; margin: 5px 4px 0; background: #1d1d1d; border: 1px solid #2e2e2e; border-radius: 2px; }
.flist table { border-collapse: collapse; width: 100%; table-layout: fixed; }
.flist th { height: 19px; padding: 0 0 3px 4px; background: #232323; text-align: left; font-weight: 400; overflow: hidden; white-space: nowrap; }
.up { width: 8px; height: 10px; fill: currentColor; margin-left: 2px; }
.flist .st { width: 41px; } .flist .du { width: 62px; }
.flist td { height: 19px; padding: 0 0 0 5px; border-top: 1px solid #2b2b2b; }
.flist tr.sel { background: #434343; } .flist .sel .time { color: #2d9bf0; }
.time { font-size: 10px; text-align: left; }
.chev { width: 6px; height: 9px; display: block; fill: none; stroke: #b0b0b0; }
.cover { position: absolute; background: #000; }
.big { left: 15px; top: 14px; width: 252px; height: 70px; }
.hscroll { position: absolute; left: 0; bottom: 0; width: 86px; height: 10px; border-radius: 5px; background: #333; }
.preview { display: flex; justify-content: center; gap: 11px; height: 30px; align-items: center; padding-right: 2px; }

.rack { height: 394px; }
.mid { margin-left: 17px; }
.cut { width: 41px; border-right: 1px solid #333; justify-content: flex-start; overflow: hidden; }
.more { color: #c8c8c8; margin-left: auto; margin-right: -1px; }
.preset { display: flex; align-items: center; height: 19px; margin-top: 5px; padding: 0 4px; }
.preset label { width: 64px; white-space: nowrap; }
.preset button + button { margin-left: 3px; }
.preset .pick { width: 204px; margin-right: 8px; }
.preset .vr { margin: 0 4px 0 6px; width: 2px; background: #2e2e2e; }
.pick { position: relative; display: block; height: 19px; background: #1d1d1d; border: 1px solid #303030; border-radius: 3px; }
.pick select { appearance: none; width: 100%; height: 100%; padding: 0 16px 0 5px; color: #cfcfcf; font-weight: 500; outline: 0; line-height: 16px; display: block; opacity: 1; }
.pick::after { content: ""; position: absolute; right: 6px; top: 4px; width: 5px; height: 5px; border: solid #c0c0c0; border-width: 0 1px 1px 0; transform: rotate(45deg); pointer-events: none; }
.rfile { position: relative; height: 18px; margin: 4px 5px 0; font-weight: 700; color: #999; }
.small { left: 35px; top: 4px; width: 233px; height: 16px; }
.slots { position: relative; margin: 6px 4px 0; height: 192px; background: #1d1d1d; border: 1px solid #2e2e2e; border-radius: 2px; }
.slots ol { list-style: none; width: 331px; }
.slots li { display: flex; align-items: center; height: 19px; border-bottom: 1px solid #2b2b2b; }
.no { width: 19px; text-align: center; border-right: 1px solid #2b2b2b; }
.pw { width: 17px; height: 17px; margin-left: 2px; border: 1px solid #333; border-radius: 2px; }
.slot { flex: 1; height: 100%; border-right: 1px solid #2b2b2b; }
.ar { width: 18px; } .ar .ic { width: 12px; height: 12px; }
.vscroll { position: absolute; right: 1px; top: 2px; width: 10px; height: 120px; border-radius: 5px; background: #333; }
.io { padding: 8px 10px 0 30px; height: 64px; color: #5c5c5c; }
.iorow { display: flex; align-items: center; height: 17px; margin-bottom: 7px; gap: 2px; }
.iol { width: 30px; white-space: nowrap; }
.val { width: 48px; }
.meter { position: relative; flex: 1; height: 17px; border: 1px solid #000; background: #1d1d1d; }
.meter::before { content: ""; position: absolute; left: 1px; top: 1px; bottom: 1px; width: 1px; background: linear-gradient(#ffee20 45%, #000 45% 55%, #ffee20 55%); }
.meter i { position: absolute; right: 0; top: 0; bottom: 0; width: 9px; border-left: 1px solid #000; background: linear-gradient(transparent 46%, #000 46% 53%, transparent 53%); }
.scale { position: relative; height: 18px; font-size: 8px; line-height: 10px; color: #9a9a9a; }
.scale span { position: absolute; top: 6px; transform: translateX(-50%); }
.scale span::before { content: ""; position: absolute; left: 50%; top: -6px; height: 4px; width: 1px; background: #888; }
.scale span:first-child { transform: none; }
.scale span:first-child::before { left: 0; }
.rscale { margin: -7px 11px 0 128px; background: repeating-linear-gradient(90deg, #777 0 1px, transparent 1px 6px) 0 0 / 100% 2px no-repeat; }
.mix { display: flex; align-items: center; height: 16px; margin: 9px 11px 0 8px; color: #555; white-space: nowrap; }
.mix label { width: 60px; } .dry { width: 43px; }
.pct { margin-left: auto; }
.mix input { appearance: none; width: 142px; height: 10px; margin-right: 6px; }
.mix input::-webkit-slider-runnable-track { height: 2px; background: linear-gradient(90deg, #444 131px, transparent 131px); }
.mix input::-webkit-slider-thumb { appearance: none; width: 10px; height: 10px; border: 2px solid #4e4e4e; border-radius: 50%; background: #232323; margin-top: -4px; }
.proc { display: flex; align-items: center; margin: 4px 4px 0 3px; padding: 4px 7px 0 0; border-top: 2px solid #2e2e2e; gap: 2px; }
.box { width: 20px; height: 20px; border: 1px solid #303030; border-radius: 3px; }
.box.on { background: #1a1a1a; color: #2d8ceb; }
.apply { width: 60px; height: 19px; border-radius: 10px; background: #2a2a2a; color: #5a5a5a; }
.proc label { margin-left: auto; white-space: nowrap; }
.proc .pick { width: 104px; }
.video { flex: 1; }

.editor { flex: 1; border-color: #2d8ceb; background: #262626; }
.editor > .tabs { background: #232323; height: 28px; padding: 0 9px; }
.pair { display: flex; padding: 0 7px; }
.side { width: 73px; flex: none; }
.ovrow { margin-top: 6px; }
.over { position: relative; flex: 1; min-width: 0; height: 30px; border: solid #606060; border-width: 2px 0; border-radius: 3px; background: #353535; }
.over svg { display: block; width: 100%; height: 26px; }
.over path { fill: none; stroke: #6cefb8; stroke-width: 1; }
.hd { position: absolute; top: 0; width: 7px; height: 26px; border: 2px solid #6a6a6a; border-radius: 4px; background: #222; }
.hd.l { left: -4px; } .hd.r { right: -3px; }
.icons { display: flex; align-items: center; padding-left: 11px; gap: 8px; }
.icons.tight { gap: 1px; padding-left: 7px; }
.rurow { margin-top: 16px; }
.ruler { position: relative; flex: 1; min-width: 0; height: 25px; background: #212121; border-top: 1px solid #000; border-right: 1px solid #000; overflow: hidden; font-size: 10px; line-height: 12px; color: #b0b0b0; }
.ruler svg { width: 100%; height: 24px; display: block; }
.ruler path { fill: none; stroke: #8a8a8a; }
.tm, .drop { position: absolute; top: 4px; white-space: nowrap; }
.tm { transform: translateX(-50%); }
.drop { left: 6px; background: linear-gradient(90deg, #212121 4px, #aaa 18px); -webkit-background-clip: text; background-clip: text; color: transparent; }
.cur { position: absolute; left: 335px; top: 0; height: 24px; width: 1px; background: #28588c; }
.waves { position: relative; flex: 1; min-width: 0; height: 181px; background: #000; }
.waves > svg:first-child { display: block; width: 100%; height: 181px; }
.grid { fill: none; stroke: #003c00; }
.zero { stroke: #b01818; } .div { stroke: #888; }
.wv { fill: none; stroke: #46dca2; stroke-width: 1; stroke-linejoin: bevel; }
.fade { position: absolute; top: 3px; width: 12px; height: 12px; } .fi { left: 12px; } .fo { right: 13px; }
.head { position: absolute; left: 0; top: -25px; bottom: 0; width: 2px; background: #fff; border-left: 1px solid #e02020; }
.head::before { content: ""; position: absolute; left: -6px; top: 12px; width: 11px; height: 14px; background: #2d8ceb; clip-path: polygon(0 0, 100% 0, 100% 60%, 50% 100%, 0 60%); }
.hud { position: absolute; left: 469px; top: 103px; height: 26px; width: 125px; display: flex; align-items: center; gap: 1px; background: rgba(34, 34, 34, .9); color: #aaa; }
.hgrip { width: 8px; height: 26px; border: solid #4c4c4c; border-width: 8px 3px; background: repeating-linear-gradient(#bbb 0 1px, #4c4c4c 1px 2px); }
.hud b { font-weight: 400; color: #2d8ceb; margin: 0 2px; } .hud .vr { margin: 4px 1px 4px auto; background: #555; }
.hud button { width: 14px; height: 16px; border: 1px solid #444; color: #2d8ceb; margin-right: 2px; border-radius: 2px; }
.hud button .ic { width: 12px; height: 12px; }
.hud span, .hud b { font-size: 10px; }
.scalebox { border: solid #000; border-width: 1px 1px 0 0; background: #232323; }
.dbs { position: relative; height: 90px; font-size: 10px; line-height: 12px; }
.dbs + .dbs { border-top: 1px solid #000; }
.dbs svg { width: 6px; height: 90px; display: block; }
.dbs span { position: absolute; left: 7px; transform: translateY(-50%); }
.dbs button { position: absolute; right: 2px; top: 36px; width: 21px; height: 18px; border: 1px solid #333; border-radius: 3px; background: #1b1b1b; color: #2d8ceb; font: 700 8px/12px "Noto Sans CJK JP", sans-serif; }
.split { position: relative; height: 10px; margin: 0 7px; background: #333; }
.split i { position: absolute; left: 569px; top: 3px; width: 24px; height: 4px; background: repeating-linear-gradient(90deg, #999 0 1px, #333 1px 2px); }
.split svg { position: absolute; right: 17px; top: 3px; width: 8px; height: 4px; fill: #999; }
.spec { position: relative; flex: 1; min-width: 0; border-bottom: 1px solid #777; background: #000; border-left: 1px dashed #eebbbb; }
.spec canvas { display: block; width: 100%; height: 359px; }
.oval { position: absolute; left: 267px; width: 123px; height: 337px; border: solid #00ff33; border-width: 19px 18px; border-radius: 50%; }
.oval.a { top: 11px; } .oval.b { top: 23px; }
.hzs { position: relative; background: #232323; border: solid #000; border-width: 0 1px 1px 0; font-size: 10px; line-height: 12px; color: #5e5e5e; }
.hzs span { position: absolute; left: 7px; transform: translateY(-50%); }
.hzs .k { color: #b4b4b4; }
.hzs span::before { content: ""; position: absolute; left: -7px; top: 5px; width: 3px; height: 1px; background: #999; }
.hzs .k::before { width: 5px; } .hzs .no::before { display: none; }
.transport { display: grid; grid-template-columns: 344px 1fr auto; align-items: start; height: 36px; padding: 1px 14px 0 10px; background: #232323; border-top: 5px solid #262626; }
.transport output { font-size: 16px; line-height: 28px; color: #3593e6; }
.btns { display: flex; gap: 10px; }
.btns button { width: 20px; height: 24px; color: #bababa; }
.btns .off { color: #4c4c4c; } .btns .rec { color: #fa3c3c; }

.sound { width: 311px; flex: none; }
.sound .tabs { height: 29px; padding: 0 10px 3px; border-bottom: 2px solid #303030; }
.none { height: 30px; padding: 7px 9px; border-bottom: 2px solid #303030; }
.spre { display: flex; align-items: center; height: 36px; padding: 0 8px 2px 9px; border-bottom: 2px solid #303030; color: #4a4a4a; }
.spre label { width: 66px; white-space: nowrap; }
.spre .pick { flex: 1; background: #282828; border-color: #282828; height: 20px; }
.spre .pick::after { border-color: #484848; }
.empty { height: 31px; border-bottom: 2px solid #303030; }
.levels { flex: 1; height: 92px; }
.levels .tabs { height: 32px; padding: 0 11px 7px; }
.large { margin: 0 5px 0 4px; height: 39px; }
.lscale { margin: 0 16px 0 6px; background: repeating-linear-gradient(90deg, #777 0 1px, transparent 1px calc(100% / 60)) 0 0 / 100% 2px no-repeat; }
.selview { width: 278px; flex: none; }
.selview .tabs { height: 27px; padding-bottom: 2px; }
.selview table { border-collapse: collapse; margin-left: 10px; table-layout: fixed; width: 264px; white-space: nowrap; line-height: 15px; }
.selview th { font-weight: 400; text-align: left; padding: 0; height: 20px; width: 50px; }
.selview thead th { width: 67px; height: 18px; } .selview thead th:first-child { width: 50px; } .selview thead th:last-child { width: 80px; }
.selview td { padding: 0; font-size: 10px; color: #3593e6; }

.status { display: flex; align-items: center; height: 20px; background: #232323; border-bottom: 1px solid #4c4c48; border-radius: 0 0 7px 7px; white-space: nowrap; padding-right: 57px; }
.msg { padding-left: 7px; flex: 1; }
.status b { font: 7px/10px "DejaVu Sans", sans-serif; }
.status span + span { border-left: 1px solid #333; padding: 0 7px; height: 14px; line-height: 13px; }
.status .gapA { width: 49px; } .status .gapB { width: 140px; }
.status .num { font-size: 10px; }
.status .last { border-right: 1px solid #333; }
</style>
